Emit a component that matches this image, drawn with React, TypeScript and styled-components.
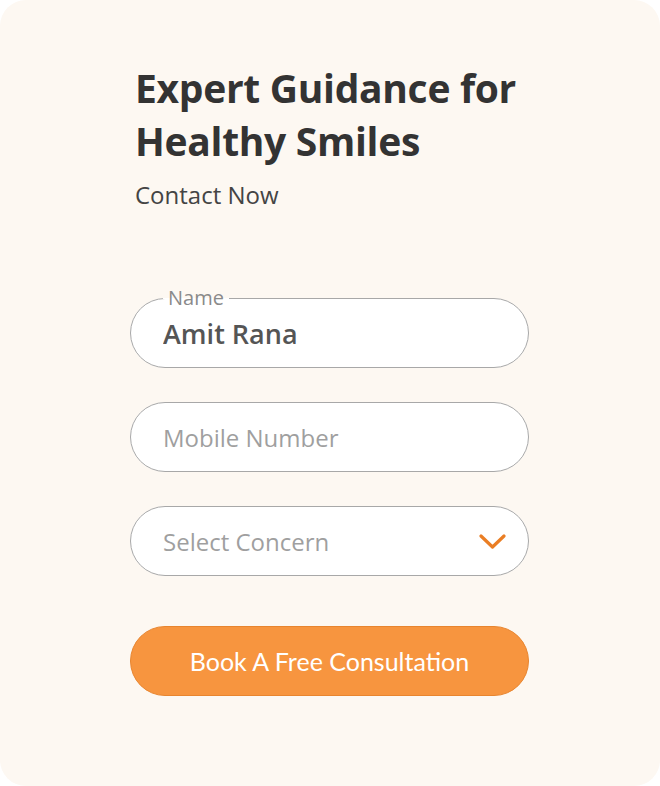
import React from 'react';
import styled, {createGlobalStyle} from "styled-components";

const GlobalStyle = createGlobalStyle`
    body {
        margin: 0;
        background: #fff;
        font-family: "Open Sans", "Noto Sans", sans-serif;
    }
`;

const App = () => {
    return (
        <>
            <GlobalStyle/>
            <Card>
                <Column>
                    <Title>Expert Guidance for Healthy Smiles</Title>
                    <SubTitle>Contact Now</SubTitle>
                    <Form onSubmit={(e) => e.preventDefault()}>
                        <Field>
                            <Legend>Name</Legend>
                            <Row>
                                <Input defaultValue="Amit Rana" filled/>
                            </Row>
                        </Field>
                        <Field>
                            <Row>
                                <Input placeholder="Mobile Number"/>
                            </Row>
                        </Field>
                        <Field>
                            <Row>
                                <SelectText>Select Concern</SelectText>
                                <svg width="27" height="17" viewBox="0 0 27 17" fill="none">
                                    <polyline points="2,3 13.5,14 25,3" stroke="#EA7E24" strokeWidth="3.2"
                                              strokeLinecap="round" strokeLinejoin="round"/>
                                </svg>
                            </Row>
                        </Field>
                        <Button type="submit">Book A Free Consultation</Button>
                    </Form>
                </Column>
            </Card>
        </>
    );
};

export default App;

const Card = styled.div`
    width: 660px;
    height: 786px;
    border-radius: 26px;
    background: #FDF8F2;
    box-sizing: border-box;
    padding: 61px 0 0 130px;
`;

const Column = styled.div`
    width: 399px;
`;

const Title = styled.h1`
    margin: 0 0 0 5px;
    width: 394px;
    font-family: "Open Sans", sans-serif;
    font-weight: 700;
    font-size: 39px;
    line-height: 53px;
    letter-spacing: -0.3px;
    color: #333;
`;

const SubTitle = styled.p`
    margin: 12px 0 0 5px;
    font-size: 24px;
    line-height: 32px;
    color: #444;
`;

const Form = styled.form`
    margin-top: 86px;
    display: flex;
    flex-direction: column;
    gap: 34px;
`;

const Field = styled.fieldset`
    margin: 0;
    padding: 0;
    border: 1px solid #A8A8A8;
    border-radius: 36px;
    background: #fff;
    min-width: 0;
`;

const Row = styled.div`
    height: 68px;
    padding: 0 22px 0 32px;
    display: flex;
    align-items: center;
    justify-content: space-between;
`;

const Legend = styled.legend`
    font-size: 20px;
    line-height: 2px;
    padding: 0 5px;
    margin-left: 32px;
    color: #8A8A8A;
`;

const Input = styled.input<{filled?: boolean}>`
    flex: 1;
    min-width: 0;
    border: none;
    outline: none;
    background: transparent;
    padding: 0;
    font-family: "Open Sans", "Noto Sans", sans-serif;
    font-size: ${({filled}) => filled ? "27px" : "24px"};
    font-weight: ${({filled}) => filled ? 600 : 400};
    color: #555;

    &::placeholder {
        color: #9F9F9F;
    }
`;

const SelectText = styled.span`
    font-size: 24px;
    color: #9F9F9F;
`;

const Button = styled.button`
    margin-top: 16px;
    height: 70px;
    border: 1px solid #E8852F;
    border-radius: 36px;
    background: #F7953F;
    color: #fff;
    font-family: "Lato", sans-serif;
    font-size: 25px;
    font-weight: 400;
    cursor: pointer;
`;
